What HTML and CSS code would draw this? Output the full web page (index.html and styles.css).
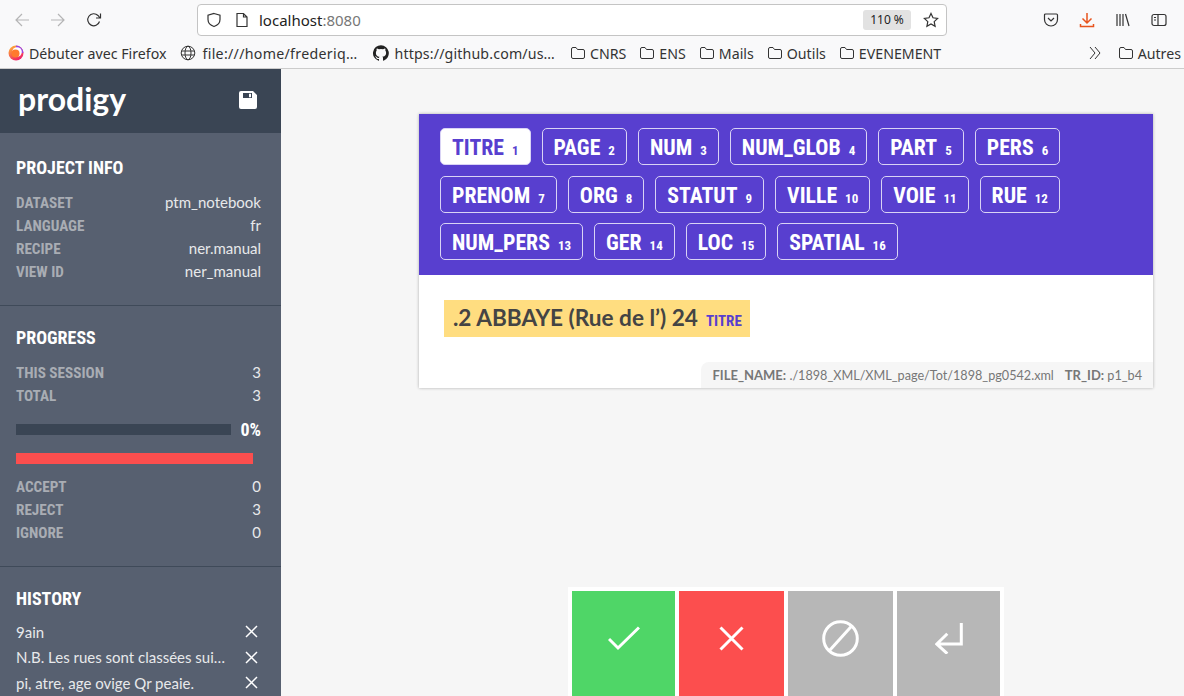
FILE: index.html
```html
<!DOCTYPE html>
<html lang="en">
<head>
<meta charset="UTF-8">
<title>Prodigy</title>
<link rel="stylesheet" href="styles.css">
</head>
<body>

<div class="browser">
  <div class="toolbar">
    <div class="nav">
      <svg class="nav-icon faded" viewBox="0 0 16 16"><path d="M15 8H2M8 2L2 8l6 6"/></svg>
      <svg class="nav-icon faded" viewBox="0 0 16 16"><path d="M1 8h13M8 2l6 6-6 6"/></svg>
      <svg class="nav-icon" viewBox="0 0 16 16"><path d="M13.500 9.500A6 6 0 1 1 12 3.500L14 6M14.500 1.500V6H10"/></svg>
    </div>
    <div class="urlbar">
      <svg class="url-icon" viewBox="0 0 16 16"><path d="M8 1.500l6 1.800v4.200c0 3.500-2.600 5.900-6 7-3.400-1.100-6-3.500-6-7V3.300z"/></svg>
      <svg class="url-icon page-icon" viewBox="0 0 16 16"><path d="M3 1.500h6.500L13 5v9.500H3zM9.500 1.500V5H13"/></svg>
      <span class="url">localhost<span class="url-port">:8080</span></span>
      <span class="zoom-badge">110 %</span>
      <svg class="url-icon star" viewBox="0 0 16 16"><path d="M8 1.500l2 4.300 4.600.6-3.400 3.200.9 4.700L8 12l-4.100 2.300.9-4.700L1.400 6.400 6 5.800z"/></svg>
    </div>
    <div class="tools">
      <svg class="tool-icon" viewBox="0 0 16 16"><path d="M2.500 2h11a1 1 0 0 1 1 1v4.500a6.500 6.500 0 0 1-13 0V3a1 1 0 0 1 1-1zM5 6l3 3 3-3"/></svg>
      <svg class="tool-icon download" viewBox="0 0 16 16"><path d="M8 1v10M3.500 6.500L8 11l4.500-4.500M1.500 12v2.500h13V12"/></svg>
      <svg class="tool-icon" viewBox="0 0 16 16"><path d="M2 2v12M5 2v12M8 2v12M10.500 2l3.500 12"/></svg>
      <svg class="tool-icon" viewBox="0 0 16 16"><rect x="1" y="2.500" width="14" height="11" rx="2"/><path d="M7 2.500v11M3 5.500h2M3 8h2"/></svg>
    </div>
  </div>
  <div class="bookmarks">
    <span class="bookmark first">
      <svg class="bm-icon" viewBox="0 0 16 16"><defs><linearGradient id="fx" x1="0" y1="0" x2="0.600" y2="1"><stop offset="0" stop-color="#ffc02e"/><stop offset="1" stop-color="#f0216a"/></linearGradient></defs><circle cx="8" cy="8" r="7.500" fill="url(#fx)"/><path d="M8 .5a7.500 7.500 0 0 1 7.500 7.500H13A5 5 0 0 0 8 3z" fill="#9a46e6"/><circle cx="9" cy="7" r="4.800" fill="#fff"/><circle cx="7.500" cy="8.500" r="4" fill="#ff7a2e"/></svg>
      Débuter avec Firefox
    </span>
    <span class="bookmark file">
      <svg class="bm-icon line" viewBox="0 0 16 16"><circle cx="8" cy="8" r="6.800"/><ellipse cx="8" cy="8" rx="3" ry="6.800"/><path d="M1.500 6h13M1.500 10h13"/></svg>
      file:///home/frederiq…
    </span>
    <span class="bookmark github">
      <svg class="bm-icon" viewBox="0 0 16 16"><path fill="#222" d="M8 .2a8 8 0 0 0-2.500 15.600c.4.100.5-.2.500-.4v-1.400c-2.200.5-2.700-1-2.700-1-.4-.9-.9-1.200-.9-1.200-.7-.5.100-.5.100-.5.800.1 1.200.8 1.200.8.700 1.200 1.900.9 2.300.7.100-.5.300-.9.500-1.100-1.800-.2-3.600-.9-3.600-4 0-.9.300-1.600.8-2.100-.1-.2-.4-1 .1-2.100 0 0 .7-.2 2.200.8a7.600 7.600 0 0 1 4 0c1.500-1 2.200-.8 2.200-.8.400 1.100.2 1.900.1 2.100.5.600.8 1.300.8 2.100 0 3.100-1.900 3.700-3.700 3.900.3.300.6.800.6 1.500v2.200c0 .2.100.5.600.4A8 8 0 0 0 8 .2z"/></svg>
      https://github.com/us…
    </span>
    <span class="bookmark folder"><svg class="bm-icon line" viewBox="0 0 16 16"><path d="M1.500 4a1.500 1.500 0 0 1 1.500-1.500h3L7.500 4.500H13A1.500 1.500 0 0 1 14.500 6v6a1.500 1.500 0 0 1-1.500 1.500H3A1.500 1.500 0 0 1 1.500 12z"/></svg>CNRS</span>
    <span class="bookmark folder"><svg class="bm-icon line" viewBox="0 0 16 16"><path d="M1.500 4a1.500 1.500 0 0 1 1.500-1.500h3L7.500 4.500H13A1.500 1.500 0 0 1 14.500 6v6a1.500 1.500 0 0 1-1.500 1.500H3A1.500 1.500 0 0 1 1.500 12z"/></svg>ENS</span>
    <span class="bookmark folder"><svg class="bm-icon line" viewBox="0 0 16 16"><path d="M1.500 4a1.500 1.500 0 0 1 1.500-1.500h3L7.500 4.500H13A1.500 1.500 0 0 1 14.500 6v6a1.500 1.500 0 0 1-1.500 1.500H3A1.500 1.500 0 0 1 1.500 12z"/></svg>Mails</span>
    <span class="bookmark folder"><svg class="bm-icon line" viewBox="0 0 16 16"><path d="M1.500 4a1.500 1.500 0 0 1 1.500-1.500h3L7.500 4.500H13A1.500 1.500 0 0 1 14.500 6v6a1.500 1.500 0 0 1-1.500 1.500H3A1.500 1.500 0 0 1 1.500 12z"/></svg>Outils</span>
    <span class="bookmark folder"><svg class="bm-icon line" viewBox="0 0 16 16"><path d="M1.500 4a1.500 1.500 0 0 1 1.500-1.500h3L7.500 4.500H13A1.500 1.500 0 0 1 14.500 6v6a1.500 1.500 0 0 1-1.500 1.500H3A1.500 1.500 0 0 1 1.500 12z"/></svg>EVENEMENT</span>
    <span class="bm-end">
      <svg class="bm-icon line" viewBox="0 0 16 16"><path d="M3 2l5 6-5 6M8 2l5 6-5 6"/></svg>
      <span class="bookmark folder"><svg class="bm-icon line" viewBox="0 0 16 16"><path d="M1.500 4a1.500 1.500 0 0 1 1.500-1.500h3L7.500 4.500H13A1.500 1.500 0 0 1 14.500 6v6a1.500 1.500 0 0 1-1.500 1.500H3A1.500 1.500 0 0 1 1.500 12z"/></svg>Autres</span>
    </span>
  </div>
</div>

<div class="app">
  <aside class="sidebar">
    <div class="logo-bar">
      <span class="logo">prodigy</span>
      <svg class="save" viewBox="0 0 18 18"><path fill-rule="evenodd" d="M2 0h12l4 4v12a2 2 0 0 1-2 2H2a2 2 0 0 1-2-2V2a2 2 0 0 1 2-2zm2 2v5h9V2zm6 .7h2v3.600h-2z"/></svg>
    </div>

    <section class="panel">
      <h2>Project Info</h2>
      <div class="row"><span class="key">Dataset</span><span>ptm_notebook</span></div>
      <div class="row"><span class="key">Language</span><span>fr</span></div>
      <div class="row"><span class="key">Recipe</span><span>ner.manual</span></div>
      <div class="row"><span class="key">View ID</span><span>ner_manual</span></div>
    </section>

    <section class="panel">
      <h2>Progress</h2>
      <div class="row"><span class="key">This session</span><span>3</span></div>
      <div class="row"><span class="key">Total</span><span>3</span></div>
      <div class="progress">
        <div class="progress-track"></div>
        <span class="progress-value">0%</span>
      </div>
      <div class="ratio"></div>
      <div class="row"><span class="key">Accept</span><span>0</span></div>
      <div class="row"><span class="key">Reject</span><span>3</span></div>
      <div class="row"><span class="key">Ignore</span><span>0</span></div>
    </section>

    <section class="panel history">
      <h2>History</h2>
      <div class="history-row"><span class="history-text">9ain</span><svg class="history-x" viewBox="0 0 13 13"><path d="M1 1l11 11M12 1L1 12"/></svg></div>
      <div class="history-row"><span class="history-text">N.B. Les rues sont classées sui…</span><svg class="history-x" viewBox="0 0 13 13"><path d="M1 1l11 11M12 1L1 12"/></svg></div>
      <div class="history-row"><span class="history-text">pi, atre, age ovige Qr peaie.</span><svg class="history-x" viewBox="0 0 13 13"><path d="M1 1l11 11M12 1L1 12"/></svg></div>
    </section>
  </aside>

  <main class="content">
    <div class="card">
      <div class="labels">
        <span class="label active">TITRE<kbd>1</kbd></span>
        <span class="label">PAGE<kbd>2</kbd></span>
        <span class="label">NUM<kbd>3</kbd></span>
        <span class="label">NUM_GLOB<kbd>4</kbd></span>
        <span class="label">PART<kbd>5</kbd></span>
        <span class="label">PERS<kbd>6</kbd></span>
        <span class="label">PRENOM<kbd>7</kbd></span>
        <span class="label">ORG<kbd>8</kbd></span>
        <span class="label">STATUT<kbd>9</kbd></span>
        <span class="label">VILLE<kbd>10</kbd></span>
        <span class="label">VOIE<kbd>11</kbd></span>
        <span class="label">RUE<kbd>12</kbd></span>
        <span class="label">NUM_PERS<kbd>13</kbd></span>
        <span class="label">GER<kbd>14</kbd></span>
        <span class="label">LOC<kbd>15</kbd></span>
        <span class="label">SPATIAL<kbd>16</kbd></span>
      </div>
      <div class="task">
        <mark class="entity">.2 ABBAYE (Rue de l’) 24<span class="entity-label">TITRE</span></mark>
      </div>
      <div class="meta-wrap">
        <div class="meta">
          <span><b>FILE_NAME:</b> ./1898_XML/XML_page/Tot/1898_pg0542.xml</span>
          <span><b>TR_ID:</b> p1_b4</span>
        </div>
      </div>
    </div>

    <div class="actions">
      <button class="action accept"><svg viewBox="0 0 32 25"><path d="M1 13l9 9L31 1.500"/></svg></button>
      <button class="action reject"><svg viewBox="0 0 25 25"><path d="M1.500 1.500l22 22M23.500 1.500l-22 22"/></svg></button>
      <button class="action ignore"><svg viewBox="0 0 37 37"><circle cx="18.500" cy="18.500" r="16.800"/><path d="M7.300 30.700L29 6.700"/></svg></button>
      <button class="action undo"><svg viewBox="0 0 28 31"><path d="M26.300 0v21H2M12.300 10.700L1.800 21l10.500 9.700"/></svg></button>
    </div>
  </main>
</div>

</body>
</html>
```

FILE: styles.css
```css
html, body {
  margin: 0;
  height: 100%;
  overflow: hidden;
}

body {
  display: flex;
  flex-direction: column;
  font-family: Lato, "Noto Sans", sans-serif;
  background-color: #f6f6f6;
  color: #444;
}

/* browser chrome */
.browser {
  height: 69px;
  flex: none;
  box-sizing: border-box;
  background-color: #f9f9fa;
  border-bottom: 1px solid #ccc;
  font-family: "Noto Sans", sans-serif;
}

.toolbar {
  height: 40px;
  display: flex;
  align-items: center;
}

.nav {
  width: 197px;
  flex: none;
  display: flex;
  align-items: center;
  gap: 20px;
  padding-left: 14px;
  box-sizing: border-box;
}

.nav-icon, .url-icon, .tool-icon {
  width: 16px;
  height: 16px;
  fill: none;
  stroke: #333;
  stroke-width: 1.200;
  flex: none;
}

.nav-icon.faded {
  stroke: #b5b5b5;
}

.urlbar {
  width: 750px;
  height: 32px;
  flex: none;
  margin-top: -1px;
  box-sizing: border-box;
  display: flex;
  align-items: center;
  padding: 0 7px 0 8px;
  background-color: #fff;
  border: 1px solid #c4c4c4;
  border-radius: 4px;
}

.page-icon {
  margin-left: 12px;
}

.url {
  margin-left: 9px;
  font-size: 15px;
  color: #222;
  flex: 1;
}

.url-port {
  color: #777;
}

.zoom-badge {
  width: 48px;
  height: 20px;
  line-height: 20px;
  text-align: center;
  font-size: 12px;
  color: #222;
  background-color: #e2e2e2;
  border-radius: 3px;
}

.star {
  margin-left: 12px;
}

.tools {
  display: flex;
  align-items: center;
  gap: 20px;
  margin-left: 96px;
}

.download {
  stroke: #e8541e;
  stroke-width: 1.500;
}

.bookmarks {
  height: 28px;
  display: flex;
  align-items: center;
  gap: 13px;
  padding: 0 3px 2px 8px;
  box-sizing: border-box;
  font-size: 14.200px;
  color: #333;
  white-space: nowrap;
}

.bookmark {
  display: flex;
  align-items: center;
  gap: 5px;
}

.bookmark.file {
  gap: 6px;
  margin-left: 1px;
  letter-spacing: 0.300px;
}

.bookmark.github {
  gap: 5px;
  margin: 0 2px 0 3px;
  letter-spacing: 0.150px;
}

.bookmark.folder {
  gap: 4px;
}

.bm-icon {
  width: 16px;
  height: 16px;
  flex: none;
}

.bm-icon.line {
  fill: none;
  stroke: #333;
  stroke-width: 1;
}

.bm-end {
  margin-left: auto;
  display: flex;
  align-items: center;
  gap: 15px;
}

/* prodigy app */
.app {
  flex: 1;
  min-height: 0;
  display: flex;
}

.sidebar {
  width: 281px;
  flex: none;
  overflow: hidden;
  background-color: #576070;
  color: #e8e9eb;
}

.logo-bar {
  height: 64px;
  margin-bottom: 3px;
  display: flex;
  align-items: center;
  justify-content: space-between;
  padding: 0 24px 0 18px;
  background-color: #3a4554;
}

.logo {
  font-size: 32px;
  font-weight: 700;
  color: #fff;
  margin-top: -5px;
}

.save {
  width: 18px;
  height: 18px;
  fill: #fff;
  margin-top: -2px;
}

.panel {
  padding: 20px 20px 21px 16px;
  border-bottom: 1px solid #3f4a59;
  font-size: 15px;
}

.panel.history {
  padding-bottom: 0;
  border-bottom: none;
}

.panel h2 {
  margin: 0 0 12px;
  font-family: "Roboto Condensed", "Liberation Sans Narrow", Roboto, sans-serif;
  font-size: 18px;
  line-height: 24px;
  font-weight: 700;
  text-transform: uppercase;
  color: #fff;
}

.panel.history h2 {
  margin-bottom: 8px;
}

.row {
  display: flex;
  justify-content: space-between;
  height: 23px;
  line-height: 23px;
}

.row span:last-child {
  line-height: 21px;
}

.key {
  font-family: "Roboto Condensed", "Liberation Sans Narrow", Roboto, sans-serif;
  font-size: 15.200px;
  font-weight: 700;
  text-transform: uppercase;
  color: #a9adb4;
}

.progress {
  display: flex;
  align-items: center;
  justify-content: space-between;
  margin-top: 10px;
  height: 23px;
}

.progress-track {
  width: 215px;
  height: 11px;
  background-color: #3a4554;
}

.progress-value {
  font-family: "Roboto Condensed", "Liberation Sans Narrow", Roboto, sans-serif;
  font-size: 18px;
  font-weight: 700;
  color: #fff;
}

.ratio {
  width: 237px;
  height: 11px;
  margin: 12px 0 12px;
  background-color: #fc4e4e;
}

.history-row {
  display: flex;
  justify-content: space-between;
  align-items: center;
  height: 25.500px;
}

.history-text {
  white-space: nowrap;
}

.history-x {
  width: 13px;
  height: 13px;
  margin-right: 3px;
  fill: none;
  stroke: #fff;
  stroke-width: 1.500;
}

.content {
  flex: 1;
  min-width: 0;
  display: flex;
  flex-direction: column;
  align-items: center;
  padding-top: 45px;
  padding-left: 107px;
}

.card {
  width: 734px;
  background-color: #fff;
  box-shadow: 0 0 3px rgba(0, 0, 0, 0.3);
}

.labels {
  height: 161px;
  box-sizing: border-box;
  display: flex;
  flex-wrap: wrap;
  align-content: flex-start;
  gap: 10.500px 11px;
  padding: 14px 22px 0 21px;
  background-color: #583fcf;
}

.label {
  height: 37px;
  box-sizing: border-box;
  display: inline-flex;
  align-items: center;
  padding: 2px 11px 0 11px;
  border: 1px solid #d9d3f5;
  border-radius: 5px;
  font-family: "Roboto Condensed", "Liberation Sans Narrow", Roboto, sans-serif;
  font-size: 21.800px;
  font-weight: 700;
  color: #fff;
}

.label.active {
  background-color: #fff;
  color: #583fcf;
}

.label kbd {
  margin: 6px 0 0 8px;
  font-family: inherit;
  font-size: 13px;
}

.task {
  padding: 25px;
  height: 87px;
  box-sizing: border-box;
}

.entity {
  display: inline-block;
  height: 37px;
  line-height: 35px;
  padding: 0 8px 0 9px;
  background-color: #ffdd80;
  color: #444;
  font-size: 22.600px;
  font-weight: 700;
}

.entity-label {
  margin-left: 8px;
  font-family: "Roboto Condensed", "Liberation Sans Narrow", Roboto, sans-serif;
  font-size: 15px;
  font-weight: 700;
  color: #583fcf;
}

.meta-wrap {
  display: flex;
  justify-content: flex-end;
}

.meta {
  height: 26px;
  line-height: 26px;
  display: flex;
  gap: 11px;
  padding: 0 11px;
  background-color: #f6f6f6;
  border-top-left-radius: 8px;
  font-size: 12.650px;
  color: #777;
}

.meta b {
  font-size: 13px;
}

.actions {
  display: flex;
  flex: none;
  gap: 4px;
  margin-top: 199px;
  padding: 4px 4px 0;
  background-color: #fff;
}

.action {
  width: 105px;
  height: 105px;
  padding: 0 0 10px;
  border: none;
  cursor: pointer;
  display: flex;
  align-items: center;
  justify-content: center;
}

.action svg {
  fill: none;
  stroke: #fff;
  stroke-width: 3;
}

.accept {
  width: 103px;
  background-color: #4fd667;
}

.accept svg {
  width: 32px;
  height: 25px;
}

.reject {
  background-color: #fc4e4e;
}

.reject svg {
  width: 25px;
  height: 25px;
}

.ignore {
  background-color: #b7b7b7;
}

.ignore svg {
  width: 37px;
  height: 37px;
}

.undo {
  width: 103px;
  background-color: #b7b7b7;
}

.undo svg {
  width: 28px;
  height: 31px;
}
```
